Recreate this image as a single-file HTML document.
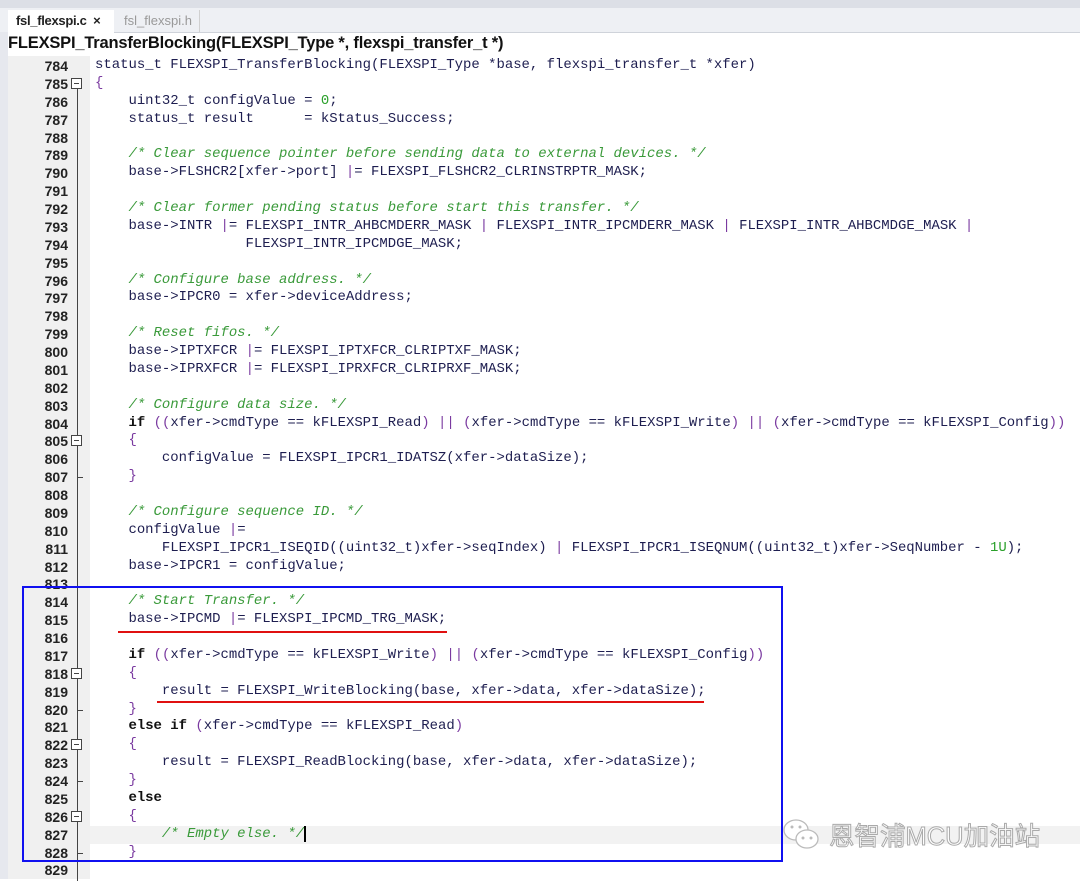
<!DOCTYPE html><html><head><meta charset="utf-8"><style>
body{margin:0;width:1080px;height:879px;overflow:hidden;background:#fff;position:relative;font-family:"Liberation Sans",sans-serif}
.top{position:absolute;left:0;top:0;width:1080px;height:8px;background:#dcdfe6}
.tabs{position:absolute;left:0;top:8px;width:1080px;height:24px;background:#eef0f4;border-bottom:1px solid #cfd3da}
.tab1{position:absolute;left:8px;top:10px;width:106px;height:23px;background:#fff;font-size:13px;font-weight:bold;line-height:22px;padding-left:8px;box-sizing:border-box;color:#222;letter-spacing:-0.3px}
.tab2{position:absolute;left:116px;top:10px;width:84px;height:22px;font-size:13px;line-height:22px;padding-left:8px;box-sizing:border-box;color:#999;border-right:1px solid #d0d0d0}
.title{position:absolute;left:8px;top:32px;font-size:16.5px;font-weight:bold;color:#111;letter-spacing:-0.2px;line-height:22px}
.lb{position:absolute;left:0;top:32px;width:8px;height:847px;background:#e6e8ee}
.gut{position:absolute;left:8px;top:56px;width:82px;height:823px;background:#f0f0f0}
.fold{position:absolute;left:77px;top:80px;width:1px;height:801px;background:#444}
.code{position:absolute;left:0;top:57px;font-family:"Liberation Mono",monospace;font-size:13.95px;line-height:17.88px;color:#1e1e50}
.r{position:relative;height:17.88px;white-space:pre}
.n{position:absolute;left:20px;width:48px;text-align:right;color:#222;font-family:"Liberation Sans",sans-serif;font-size:14px;font-weight:bold;top:1px}
.t{position:absolute;left:95px}
.c{color:#3a9a3a;font-style:italic}
.k{font-weight:bold;color:#111}
.p{color:#7a3aa0}
.g{color:#2aa02a}
.bx{position:absolute;left:71px;top:3px;width:11px;height:11px;border:1px solid #444;background:#fff;box-sizing:border-box}
.bx:after{content:"";position:absolute;left:2px;top:4px;width:5px;height:1px;background:#444}
.tk{position:absolute;left:78px;top:9px;width:5px;height:1px;background:#444}
.hl{background:#f2f2f2;position:absolute;left:90px;width:990px;height:17.9px}
</style></head><body>
<div class="top"></div><div class="tabs"></div>
<div class="tab1">fsl_flexspi.c &nbsp;<span style="font-weight:bold">×</span></div>
<div class="tab2">fsl_flexspi.h</div>
<div class="title">FLEXSPI_TransferBlocking(FLEXSPI_Type *, flexspi_transfer_t *)</div>
<div class="lb"></div><div class="gut"></div>
<div class="hl" style="top:826px"></div>
<div class="fold"></div>
<div class="code">
<div class="r"><span class="n">784</span><span class="t">status_t FLEXSPI_TransferBlocking(FLEXSPI_Type *base, flexspi_transfer_t *xfer)</span></div>
<div class="r"><span class="n">785</span><span class="bx"></span><span class="t p">{</span></div>
<div class="r"><span class="n">786</span><span class="t">    uint32_t configValue = <span class="g">0</span>;</span></div>
<div class="r"><span class="n">787</span><span class="t">    status_t result      = kStatus_Success;</span></div>
<div class="r"><span class="n">788</span></div>
<div class="r"><span class="n">789</span><span class="t c">    /* Clear sequence pointer before sending data to external devices. */</span></div>
<div class="r"><span class="n">790</span><span class="t">    base-&gt;FLSHCR2[xfer-&gt;port] <span class="p">|</span>= FLEXSPI_FLSHCR2_CLRINSTRPTR_MASK;</span></div>
<div class="r"><span class="n">791</span></div>
<div class="r"><span class="n">792</span><span class="t c">    /* Clear former pending status before start this transfer. */</span></div>
<div class="r"><span class="n">793</span><span class="t">    base-&gt;INTR <span class="p">|</span>= FLEXSPI_INTR_AHBCMDERR_MASK <span class="p">|</span> FLEXSPI_INTR_IPCMDERR_MASK <span class="p">|</span> FLEXSPI_INTR_AHBCMDGE_MASK <span class="p">|</span></span></div>
<div class="r"><span class="n">794</span><span class="t">                  FLEXSPI_INTR_IPCMDGE_MASK;</span></div>
<div class="r"><span class="n">795</span></div>
<div class="r"><span class="n">796</span><span class="t c">    /* Configure base address. */</span></div>
<div class="r"><span class="n">797</span><span class="t">    base-&gt;IPCR0 = xfer-&gt;deviceAddress;</span></div>
<div class="r"><span class="n">798</span></div>
<div class="r"><span class="n">799</span><span class="t c">    /* Reset fifos. */</span></div>
<div class="r"><span class="n">800</span><span class="t">    base-&gt;IPTXFCR <span class="p">|</span>= FLEXSPI_IPTXFCR_CLRIPTXF_MASK;</span></div>
<div class="r"><span class="n">801</span><span class="t">    base-&gt;IPRXFCR <span class="p">|</span>= FLEXSPI_IPRXFCR_CLRIPRXF_MASK;</span></div>
<div class="r"><span class="n">802</span></div>
<div class="r"><span class="n">803</span><span class="t c">    /* Configure data size. */</span></div>
<div class="r"><span class="n">804</span><span class="t">    <span class="k">if</span> <span class="p">((</span>xfer-&gt;cmdType == kFLEXSPI_Read<span class="p">)</span> <span class="p">||</span> <span class="p">(</span>xfer-&gt;cmdType == kFLEXSPI_Write<span class="p">)</span> <span class="p">||</span> <span class="p">(</span>xfer-&gt;cmdType == kFLEXSPI_Config<span class="p">))</span></span></div>
<div class="r"><span class="n">805</span><span class="bx"></span><span class="t p">    {</span></div>
<div class="r"><span class="n">806</span><span class="t">        configValue = FLEXSPI_IPCR1_IDATSZ(xfer-&gt;dataSize);</span></div>
<div class="r"><span class="n">807</span><span class="tk"></span><span class="t p">    }</span></div>
<div class="r"><span class="n">808</span></div>
<div class="r"><span class="n">809</span><span class="t c">    /* Configure sequence ID. */</span></div>
<div class="r"><span class="n">810</span><span class="t">    configValue <span class="p">|</span>=</span></div>
<div class="r"><span class="n">811</span><span class="t">        FLEXSPI_IPCR1_ISEQID((uint32_t)xfer-&gt;seqIndex) <span class="p">|</span> FLEXSPI_IPCR1_ISEQNUM((uint32_t)xfer-&gt;SeqNumber - <span class="g">1U</span>);</span></div>
<div class="r"><span class="n">812</span><span class="t">    base-&gt;IPCR1 = configValue;</span></div>
<div class="r"><span class="n">813</span></div>
<div class="r"><span class="n">814</span><span class="t c">    /* Start Transfer. */</span></div>
<div class="r"><span class="n">815</span><span class="t">    base-&gt;IPCMD <span class="p">|</span>= FLEXSPI_IPCMD_TRG_MASK;</span></div>
<div class="r"><span class="n">816</span></div>
<div class="r"><span class="n">817</span><span class="t">    <span class="k">if</span> <span class="p">((</span>xfer-&gt;cmdType == kFLEXSPI_Write<span class="p">)</span> <span class="p">||</span> <span class="p">(</span>xfer-&gt;cmdType == kFLEXSPI_Config<span class="p">))</span></span></div>
<div class="r"><span class="n">818</span><span class="bx"></span><span class="t p">    {</span></div>
<div class="r"><span class="n">819</span><span class="t">        result = FLEXSPI_WriteBlocking(base, xfer-&gt;data, xfer-&gt;dataSize);</span></div>
<div class="r"><span class="n">820</span><span class="tk"></span><span class="t p">    }</span></div>
<div class="r"><span class="n">821</span><span class="t">    <span class="k">else if</span> <span class="p">(</span>xfer-&gt;cmdType == kFLEXSPI_Read<span class="p">)</span></span></div>
<div class="r"><span class="n">822</span><span class="bx"></span><span class="t p">    {</span></div>
<div class="r"><span class="n">823</span><span class="t">        result = FLEXSPI_ReadBlocking(base, xfer-&gt;data, xfer-&gt;dataSize);</span></div>
<div class="r"><span class="n">824</span><span class="tk"></span><span class="t p">    }</span></div>
<div class="r"><span class="n">825</span><span class="t k">    else</span></div>
<div class="r"><span class="n">826</span><span class="bx"></span><span class="t p">    {</span></div>
<div class="r"><span class="n">827</span><span class="t"><span class="c">        /* Empty else. */</span><span style="border-left:2px solid #000"></span></span></div>
<div class="r"><span class="n">828</span><span class="tk"></span><span class="t p">    }</span></div>
<div class="r"><span class="n">829</span></div>
</div>
<div style="position:absolute;left:22px;top:586px;width:761px;height:276px;border:2px solid #1010f0;box-sizing:border-box"></div>
<div style="position:absolute;left:118px;top:631px;width:329px;height:2px;background:#e01010"></div>
<div style="position:absolute;left:157px;top:701px;width:547px;height:2px;background:#e01010"></div>
<div style="position:absolute;left:782px;top:818px;width:40px;height:34px">
<svg width="40" height="34" viewBox="0 0 40 34"><ellipse cx="14" cy="12" rx="12" ry="10" fill="#fff" stroke="#bbb" stroke-width="1.3"/><ellipse cx="25" cy="21" rx="11" ry="9" fill="#fff" stroke="#bbb" stroke-width="1.3"/><circle cx="10" cy="9" r="1.5" fill="#bbb"/><circle cx="18" cy="9" r="1.5" fill="#bbb"/><circle cx="21" cy="20" r="1.5" fill="#bbb"/><circle cx="29" cy="20" r="1.5" fill="#bbb"/></svg></div>
<div style="position:absolute;left:829px;top:816px;font-family:'Liberation Sans','Noto Sans CJK SC',sans-serif;font-size:25.5px;color:#fff;-webkit-text-stroke:1px #aaa">恩智浦MCU加油站</div>
</body></html>
